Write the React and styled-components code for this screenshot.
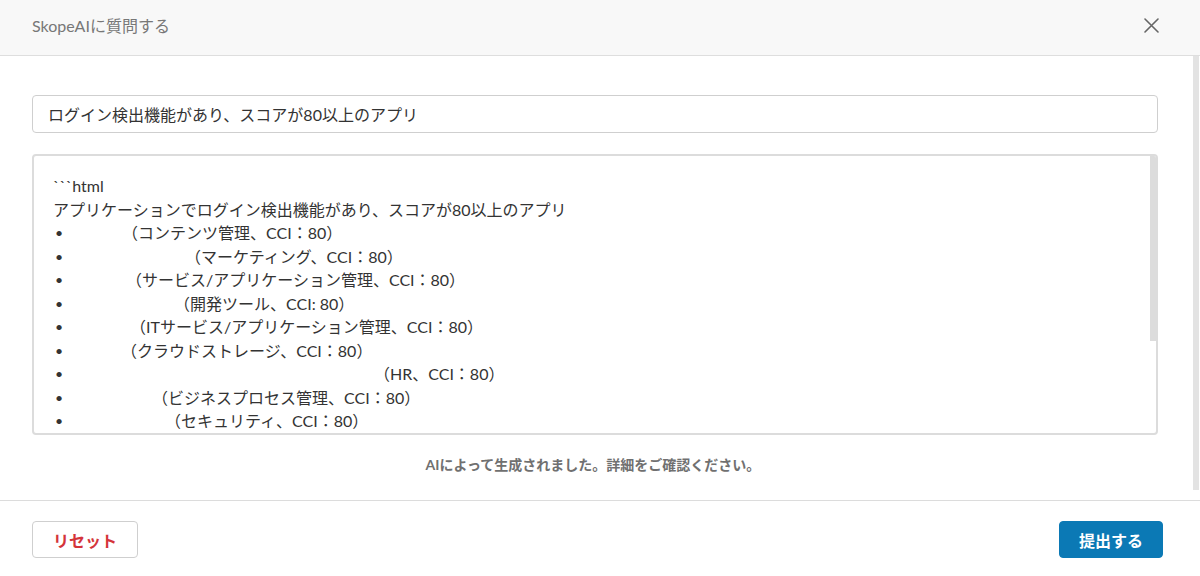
import React from "react";
import styled, { createGlobalStyle } from "styled-components";

const GlobalStyle = createGlobalStyle`
  html, body { margin: 0; padding: 0; background: #fff; }
  body {
    font-family: Lato, "Noto Sans CJK JP", sans-serif;
    color: #333;
  }
  * { box-sizing: border-box; }
`;

const Modal = styled.div`
  width: 1200px;
  height: 576px;
  display: flex;
  flex-direction: column;
  background: #fff;
`;

const Header = styled.header`
  height: 56px;
  flex: none;
  display: flex;
  align-items: center;
  justify-content: space-between;
  padding: 0 32px 5px 32px;
  background: #f8f8f8;
  border-bottom: 1px solid #dedede;
`;

const Title = styled.h1`
  margin: 0;
  font-size: 16px;
  font-weight: 400;
  color: #777;
`;

const CloseButton = styled.button`
  border: 0;
  background: transparent;
  padding: 0;
  width: 18px;
  height: 18px;
  display: flex;
  align-items: center;
  justify-content: center;
  cursor: pointer;
  margin-right: 8px;
`;

const Body = styled.main`
  position: relative;
  flex: 1;
  overflow: hidden;
  padding: 39px 42px 0 32px;
  display: flex;
  flex-direction: column;
`;

const ScrollThumb = styled.div`
  position: absolute;
  top: ${(p) => p.$top || 0}px;
  right: ${(p) => p.$right || 0}px;
  width: ${(p) => p.$w}px;
  height: ${(p) => p.$h}px;
  background: ${(p) => p.$color || "#e2e2e2"};
  border-radius: ${(p) => p.$radius || 0}px;
`;

const QueryInput = styled.div`
  flex: none;
  height: 38px;
  border: 1px solid #cfcfcf;
  border-radius: 4px;
  padding: 0 15px;
  display: flex;
  align-items: center;
  font-size: 16px;
  color: #333;
`;

const AnswerFrame = styled.div`
  position: relative;
  flex: none;
  margin-top: 21px;
  height: 281px;
  border: 2px solid #dcdcdc;
  border-radius: 4px;
  overflow: hidden;
`;

const Answer = styled.div`
  height: 100%;
  padding: 18px 19px;
  overflow: hidden;
  font-size: 16px;
  line-height: 23.5px;
  color: #333;
`;

const Line = styled.div`
  white-space: nowrap;
`;

const List = styled.ul`
  margin: 0;
  padding: 0;
  list-style: none;
`;

const Item = styled.li`
  display: flex;
  align-items: center;
  white-space: nowrap;
`;

const Bullet = styled.span`
  flex: none;
  width: 27px;
  padding-left: 2px;
  font-size: 14px;
`;

const Hidden = styled.span`
  display: inline-block;
  flex: none;
  width: ${(p) => p.$w}px;
`;

const Note = styled.p`
  margin: 20px 0 0;
  text-align: center;
  font-size: 14px;
  line-height: 20px;
  font-weight: 700;
  color: #707070;
  padding-right: 4px;
`;

const Footer = styled.footer`
  flex: none;
  height: 76px;
  border-top: 1px solid #dcdcdc;
  padding: 20px 37px 0 32px;
  display: flex;
  justify-content: space-between;
  align-items: flex-start;
`;

const Button = styled.button`
  height: 37px;
  padding: 0;
  border-radius: 4px;
  font-family: Lato, "Noto Sans CJK JP", sans-serif;
  font-size: 16px;
  font-weight: 700;
  white-space: nowrap;
  cursor: pointer;
  border: 1px solid ${(p) => (p.$primary ? "#0b79b5" : "#cfcfcf")};
  background: ${(p) => (p.$primary ? "#0b79b5" : "#fff")};
  color: ${(p) => (p.$primary ? "#fff" : "#d4343a")};
  width: ${(p) => p.$w}px;
`;

const items = [
  [42, "（コンテンツ管理、CCI：80）"],
  [105, "（マーケティング、CCI：80）"],
  [46, "（サービス/アプリケーション管理、CCI：80）"],
  [94, "（開発ツール、CCI: 80）"],
  [50, "（ITサービス/アプリケーション管理、CCI：80）"],
  [41, "（クラウドストレージ、CCI：80）"],
  [294, "（HR、CCI：80）"],
  [72, "（ビジネスプロセス管理、CCI：80）"],
  [85, "（セキュリティ、CCI：80）"],
  [60, "（コラボレーション、CCI：80）"],
  [70, "（財務、CCI：80）"],
  [55, "（分析、CCI：80）"],
  [64, "（CRM、CCI：80）"],
];

export default function App() {
  return (
    <>
      <GlobalStyle />
      <Modal>
        <Header>
          <Title>SkopeAIに質問する</Title>
          <CloseButton aria-label="閉じる">
            <svg width="15" height="15" viewBox="0 0 15 15">
              <path d="M1 1 L14 14 M14 1 L1 14" stroke="#666" strokeWidth="1.6" strokeLinecap="round" />
            </svg>
          </CloseButton>
        </Header>
        <Body>
          <QueryInput>ログイン検出機能があり、スコアが80以上のアプリ</QueryInput>
          <AnswerFrame>
            <Answer>
              <Line>```html</Line>
              <Line>アプリケーションでログイン検出機能があり、スコアが80以上のアプリ</Line>
              <List>
                {items.map(([w, t], i) => (
                  <Item key={i}>
                    <Bullet>•</Bullet>
                    <Hidden $w={w} />
                    {t}
                  </Item>
                ))}
              </List>
              <Line>```</Line>
            </Answer>
            <ScrollThumb $w={6} $h={185} $right={0} $color="#dcdcdc" />
          </AnswerFrame>
          <Note>AIによって生成されました。詳細をご確認ください。</Note>
          <ScrollThumb $w={6} $h={434} $right={1} $color="#e3e3e3" />
        </Body>
        <Footer>
          <Button $w={106}>リセット</Button>
          <Button $primary $w={104}>提出する</Button>
        </Footer>
      </Modal>
    </>
  );
}
